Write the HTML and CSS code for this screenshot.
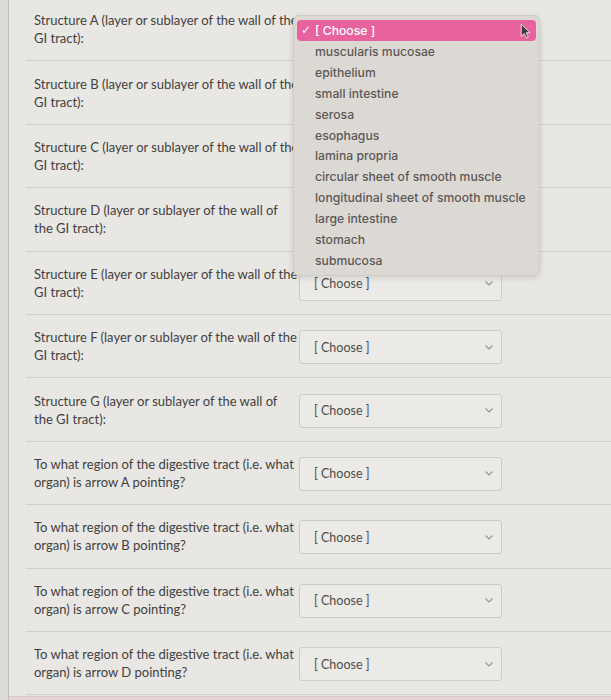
FILE: index.html
```html
<!DOCTYPE html>
<html lang="en">
<head>
<meta charset="utf-8">
<title>Quiz</title>
<link rel="stylesheet" href="styles.css">
</head>
<body>
<div class="page">
  <div class="list">
    <div class="row">
      <div class="label">Structure A (layer or sublayer of the wall of the<br>GI tract):</div>
      <div class="select covered"><span>[ Choose ]</span><svg class="chev" viewBox="0 0 8 5"><polyline points="0.5,0.5 4,4 7.5,0.5"/></svg></div>
    </div>
    <div class="row">
      <div class="label">Structure B (layer or sublayer of the wall of the<br>GI tract):</div>
      <div class="select covered"><span>[ Choose ]</span><svg class="chev" viewBox="0 0 8 5"><polyline points="0.5,0.5 4,4 7.5,0.5"/></svg></div>
    </div>
    <div class="row">
      <div class="label">Structure C (layer or sublayer of the wall of the<br>GI tract):</div>
      <div class="select covered"><span>[ Choose ]</span><svg class="chev" viewBox="0 0 8 5"><polyline points="0.5,0.5 4,4 7.5,0.5"/></svg></div>
    </div>
    <div class="row">
      <div class="label">Structure D (layer or sublayer of the wall of<br>the GI tract):</div>
      <div class="select covered"><span>[ Choose ]</span><svg class="chev" viewBox="0 0 8 5"><polyline points="0.5,0.5 4,4 7.5,0.5"/></svg></div>
    </div>
    <div class="row">
      <div class="label">Structure E (layer or sublayer of the wall of the<br>GI tract):</div>
      <div class="select"><span>[ Choose ]</span><svg class="chev" viewBox="0 0 8 5"><polyline points="0.5,0.5 4,4 7.5,0.5"/></svg></div>
    </div>
    <div class="row">
      <div class="label">Structure F (layer or sublayer of the wall of the<br>GI tract):</div>
      <div class="select"><span>[ Choose ]</span><svg class="chev" viewBox="0 0 8 5"><polyline points="0.5,0.5 4,4 7.5,0.5"/></svg></div>
    </div>
    <div class="row">
      <div class="label">Structure G (layer or sublayer of the wall of<br>the GI tract):</div>
      <div class="select"><span>[ Choose ]</span><svg class="chev" viewBox="0 0 8 5"><polyline points="0.5,0.5 4,4 7.5,0.5"/></svg></div>
    </div>
    <div class="row">
      <div class="label">To what region of the digestive tract (i.e. what<br>organ) is arrow A pointing?</div>
      <div class="select"><span>[ Choose ]</span><svg class="chev" viewBox="0 0 8 5"><polyline points="0.5,0.5 4,4 7.5,0.5"/></svg></div>
    </div>
    <div class="row">
      <div class="label">To what region of the digestive tract (i.e. what<br>organ) is arrow B pointing?</div>
      <div class="select"><span>[ Choose ]</span><svg class="chev" viewBox="0 0 8 5"><polyline points="0.5,0.5 4,4 7.5,0.5"/></svg></div>
    </div>
    <div class="row">
      <div class="label">To what region of the digestive tract (i.e. what<br>organ) is arrow C pointing?</div>
      <div class="select"><span>[ Choose ]</span><svg class="chev" viewBox="0 0 8 5"><polyline points="0.5,0.5 4,4 7.5,0.5"/></svg></div>
    </div>
    <div class="row">
      <div class="label">To what region of the digestive tract (i.e. what<br>organ) is arrow D pointing?</div>
      <div class="select"><span>[ Choose ]</span><svg class="chev" viewBox="0 0 8 5"><polyline points="0.5,0.5 4,4 7.5,0.5"/></svg></div>
    </div>
  </div>
  <div class="footer-band"></div>
</div>

<div class="menu">
  <div class="menu-item selected"><span class="check">✓</span><span>[ Choose ]</span>
    <svg class="cursor" viewBox="0 0 10 15"><path d="M1 1 L1 12.5 L3.8 9.8 L5.8 14 L7.6 13.2 L5.7 9.1 L9.2 9.1 Z"/></svg>
  </div>
  <div class="menu-item">muscularis mucosae</div>
  <div class="menu-item">epithelium</div>
  <div class="menu-item">small intestine</div>
  <div class="menu-item">serosa</div>
  <div class="menu-item">esophagus</div>
  <div class="menu-item">lamina propria</div>
  <div class="menu-item">circular sheet of smooth muscle</div>
  <div class="menu-item">longitudinal sheet of smooth muscle</div>
  <div class="menu-item">large intestine</div>
  <div class="menu-item">stomach</div>
  <div class="menu-item">submucosa</div>
</div>
</body>
</html>
```

FILE: styles.css
```css
html, body {
  margin: 0;
  padding: 0;
}

body {
  width: 611px;
  height: 700px;
  overflow: hidden;
  background: #dcdbd7;
  font-family: Lato, "Liberation Sans", sans-serif;
  position: relative;
}

.page {
  margin-left: 8px;
  height: 700px;
  border-left: 1px solid #c2c1bd;
  background: #e8e7e3;
  display: flex;
  flex-direction: column;
}

.list {
  margin-top: -2px;
  margin-left: 17px;
  display: flex;
  flex-direction: column;
}

.row {
  box-sizing: border-box;
  height: 63.4px;
  border-bottom: 1px solid #d2d0cc;
  display: flex;
  align-items: center;
}

.label {
  width: 265px;
  padding-left: 8px;
  font-size: 13px;
  line-height: 18px;
  color: #42413f;
  white-space: nowrap;
  flex: none;
}

.select {
  box-sizing: border-box;
  width: 203px;
  height: 34px;
  margin-top: 2px;
  border: 1px solid #cdcbc7;
  border-radius: 3px;
  background: #ebeae6;
  display: flex;
  align-items: center;
  justify-content: space-between;
  padding: 0 8px 0 14px;
  font-size: 12.5px;
  color: #4e4d4b;
  position: relative;
  z-index: 1;
}

.select.covered {
  visibility: hidden;
}

.chev {
  width: 8px;
  height: 5px;
  fill: none;
  stroke: #9a9895;
  stroke-width: 1.2;
}

.footer-band {
  flex: 1;
  margin-top: 1px;
  border-top: 1px solid #d9c9c9;
  background: #e6d3d3;
}

.menu {
  position: absolute;
  left: 293px;
  top: 15px;
  width: 247px;
  height: 261px;
  box-sizing: border-box;
  padding: 4px 3px;
  background: #dcd9d5;
  border: 1px solid #cfccc8;
  border-radius: 6px;
  box-shadow: 0 2px 6px rgba(0, 0, 0, 0.12);
  z-index: 5;
  font-family: Inter, "Noto Sans", sans-serif;
  font-size: 12.2px;
  font-weight: 500;
  color: #5d5856;
  display: flex;
  flex-direction: column;
}

.menu-item {
  height: 20.9px;
  line-height: 20.9px;
  padding-left: 18px;
  white-space: nowrap;
}

.menu-item.selected {
  height: 21px;
  line-height: 21px;
  margin-bottom: 1px;
  background: #e8639e;
  color: #ffffff;
  border-radius: 4px;
  padding-left: 2px;
  display: flex;
  align-items: center;
  position: relative;
}

.check {
  width: 14px;
  font-family: "DejaVu Sans", sans-serif;
  font-size: 12px;
  font-weight: bold;
  text-align: center;
  margin-right: 2px;
}

.cursor {
  position: absolute;
  right: 5px;
  top: 3px;
  width: 11px;
  height: 16px;
  fill: #3a3838;
  stroke: #f4f2f2;
  stroke-width: 0.8;
}
```
